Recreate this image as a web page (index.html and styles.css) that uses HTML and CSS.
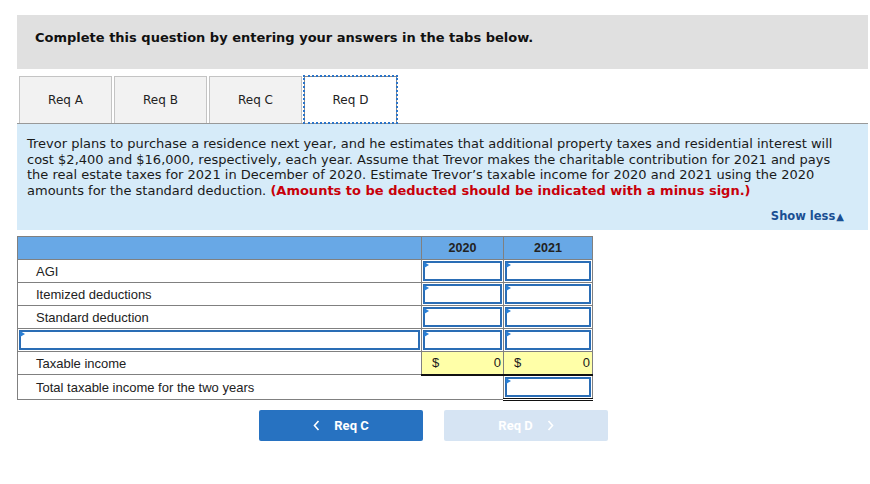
FILE: index.html
```html
<!DOCTYPE html>
<html>
<head>
<meta charset="utf-8">
<link rel="stylesheet" href="styles.css">
</head>
<body>
<div class="wrap">
  <div class="intro">Complete this question by entering your answers in the tabs below.</div>
  <div class="tabs">
    <div class="tab">Req A</div>
    <div class="tab">Req B</div>
    <div class="tab">Req C</div>
    <div class="tab active">Req D</div>
  </div>
  <div class="panel">
    <p class="question">Trevor plans to purchase a residence next year, and he estimates that additional property taxes and residential interest will cost $2,400 and $16,000, respectively, each year. Assume that Trevor makes the charitable contribution for 2021 and pays the real estate taxes for 2021 in December of 2020. Estimate Trevor’s taxable income for 2020 and 2021 using the 2020 amounts for the standard deduction. <strong class="warn">(Amounts to be deducted should be indicated with a minus sign.)</strong></p>
    <div class="showless">Show less<span class="tri">▲</span></div>
  </div>
  <table class="grid">
    <colgroup><col class="c-label"><col class="c-y1"><col class="c-y2"></colgroup>
    <thead>
      <tr><th></th><th>2020</th><th>2021</th></tr>
    </thead>
    <tbody>
      <tr><td class="label">AGI</td><td class="inp"><div class="box"></div></td><td class="inp"><div class="box"></div></td></tr>
      <tr><td class="label">Itemized deductions</td><td class="inp"><div class="box"></div></td><td class="inp"><div class="box"></div></td></tr>
      <tr><td class="label">Standard deduction</td><td class="inp"><div class="box"></div></td><td class="inp"><div class="box"></div></td></tr>
      <tr><td class="inp"><div class="box"></div></td><td class="inp"><div class="box"></div></td><td class="inp"><div class="box"></div></td></tr>
      <tr><td class="label">Taxable income</td><td class="calc"><span>$</span><span>0</span></td><td class="calc"><span>$</span><span>0</span></td></tr>
      <tr><td class="label" colspan="2">Total taxable income for the two years</td><td class="inp total"><div class="box"></div></td></tr>
    </tbody>
  </table>
  <div class="nav">
    <div class="btn prev"><svg class="chev" width="7" height="11" viewBox="0 0 7 11"><path d="M5.5 1 L1.5 5.5 L5.5 10" fill="none" stroke="#fff" stroke-width="1.6"/></svg>Req C</div>
    <div class="btn next disabled">Req D<svg class="chev" width="7" height="11" viewBox="0 0 7 11"><path d="M1.5 1 L5.5 5.5 L1.5 10" fill="none" stroke="#fff" stroke-width="1.6"/></svg></div>
  </div>
</div>
</body>
</html>
```

FILE: styles.css
```css
html, body { margin: 0; padding: 0; background: #fff; }
.wrap { padding: 15px 2px 0 17px; width: 851px; font-family: "DejaVu Sans", Verdana, sans-serif; color: #1a1a1a; }

.intro { background: #e0e0e0; height: 54px; box-sizing: border-box; padding: 15px 0 0 18px; font-weight: bold; font-size: 13px; line-height: 16px; color: #111; }

.tabs { display: flex; gap: 2px; padding-left: 2px; margin-top: 7px; height: 47px; }
.tab { width: 93px; box-sizing: border-box; height: 47px; background: #f2f2f2; border: 1px solid #c4c4c4; border-bottom: none; display: flex; align-items: center; justify-content: center; font-size: 12px; color: #222; }
.tab.active { background: #fff; border: 1px solid #8a8a8a; border-bottom: none; position: relative; }
.tab.active::after { content: ""; position: absolute; inset: -2px -2px -1px -2px; border: 2px dotted #2a74c9; pointer-events: none; }

.panel { background: #d6ebf9; border-top: 1px solid #999; height: 107px; box-sizing: border-box; padding: 12px 14px 0 10px; }
.question { margin: 0; font-size: 13px; line-height: 15.6px; color: #1a1a1a; }
.warn { color: #c8000a; }
.showless { text-align: right; margin-top: 11px; padding-right: 10px; font-size: 11.5px; font-weight: bold; color: #1a4f93; line-height: 14px; }
.tri { font-size: 10px; margin-left: 1px; }

.grid { margin-top: 6px; border-collapse: collapse; width: 575px; table-layout: fixed; font-family: "Liberation Sans", Arial, sans-serif; font-size: 13px; }
.c-label { width: 404px; }
.c-y1 { width: 82px; }
.c-y2 { width: 89px; }
.grid th, .grid td { border: 1px solid #808080; height: 23px; padding: 0; box-sizing: border-box; }
.grid thead th { background: #68a8e6; font-weight: bold; color: #222; font-size: 12.5px; text-align: center; }
.grid td.label { padding-left: 18px; padding-top: 1px; color: #222; }
.grid td.inp { padding: 1px; }
.box { height: 20px; box-sizing: border-box; border: 2px solid #2a6db5; background: #fff; position: relative; }
.box::before { content: ""; position: absolute; left: -1px; top: -1px; border-left: 5px solid #2a7fd4; border-top: 3px solid transparent; border-bottom: 3px solid transparent; }
.grid td.calc { background: #ffffa8; border-bottom: 2px solid #111; padding: 0 2px 0 10px; }
.calc span:first-child { float: left; }
.calc span:last-child { float: right; }
.grid td.total { border-bottom: 3px double #111; }

.nav { display: flex; gap: 21px; padding-left: 242px; margin-top: 9px; }
.btn { width: 164px; height: 31px; border-radius: 2px; background: #2772c1; color: #fff; font-family: Roboto, "Liberation Sans", Arial, sans-serif; font-weight: bold; font-size: 13px; display: flex; align-items: center; justify-content: center; }
.btn.disabled { background: #d6e4f3; }
.prev .chev { margin-right: 14px; }
.next .chev { margin-left: 14px; }
```
